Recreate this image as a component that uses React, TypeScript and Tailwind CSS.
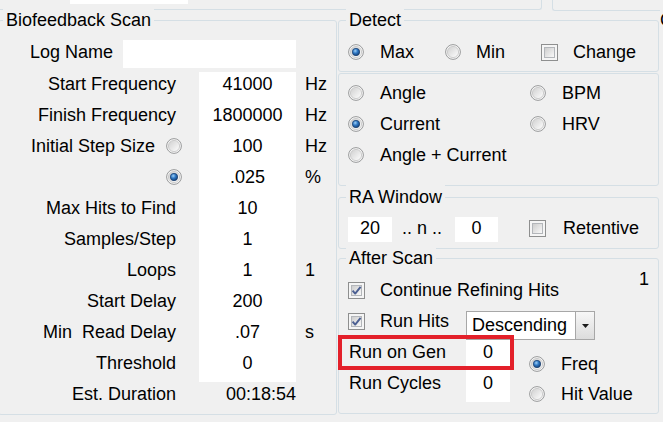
import React from "react";

function Radio({ checked = false }: { checked?: boolean }) {
  return (
    <svg width="16" height="16" viewBox="0 0 16 16" className="block shrink-0">
      <defs>
        <linearGradient id="rbFace" x1="0" y1="0" x2="1" y2="1">
          <stop offset="0" stopColor="#cfcfcf" />
          <stop offset="1" stopColor="#ffffff" />
        </linearGradient>
        <radialGradient id="rbDot" cx="40%" cy="35%" r="70%">
          <stop offset="0" stopColor="#9fd0f6" />
          <stop offset="0.45" stopColor="#2f78c4" />
          <stop offset="1" stopColor="#0f3a70" />
        </radialGradient>
      </defs>
      <circle cx="8" cy="8" r="7.4" fill="#f6f6f6" stroke="#999a9b" strokeWidth="1" />
      <circle cx="8" cy="8" r="5.6" fill="url(#rbFace)" stroke="#c4c4c4" strokeWidth="0.8" />
      {checked && <circle cx="8" cy="8" r="3.7" fill="url(#rbDot)" stroke="#1b3d6b" strokeWidth="0.7" />}
    </svg>
  );
}

function Check({ checked = false }: { checked?: boolean }) {
  return (
    <svg width="17" height="17" viewBox="0 0 17 17" className="block shrink-0">
      <defs>
        <linearGradient id="cbFace" x1="0" y1="0" x2="1" y2="1">
          <stop offset="0" stopColor="#cbcbcb" />
          <stop offset="1" stopColor="#fbfbfb" />
        </linearGradient>
      </defs>
      <rect x="0.5" y="0.5" width="16" height="16" fill="#f5f5f5" stroke="#8e8f8f" />
      <rect x="3.5" y="3.5" width="10" height="10" fill="url(#cbFace)" stroke="#b3b6ba" />
      {checked && (
        <path d="M4.6 8.6 L7.2 11.6 L12.6 4.8" fill="none" stroke="#4b5f92" strokeWidth="1.9" strokeLinejoin="round" />
      )}
    </svg>
  );
}

function RadioOpt({ label, checked = false }: { label: string; checked?: boolean }) {
  return (
    <div className="flex h-[24px] items-center">
      <Radio checked={checked} />
      <span className="ml-[16px] whitespace-nowrap">{label}</span>
    </div>
  );
}

function CheckOpt({ label, checked = false }: { label: string; checked?: boolean }) {
  return (
    <div className="flex h-[24px] items-center">
      <Check checked={checked} />
      <span className="ml-[15px] whitespace-nowrap">{label}</span>
    </div>
  );
}

function GroupTitle({ text }: { text: string }) {
  return (
    <span className="absolute left-[7px] top-[-13px] whitespace-nowrap bg-[#f0f0f0] px-[3px] leading-[24px]">
      {text}
    </span>
  );
}

type ScanRow = {
  label: string;
  value: string;
  unit?: string;
  radio?: "on" | "off";
};

const scanRows: ScanRow[] = [
  { label: "Start Frequency", value: "41000", unit: "Hz" },
  { label: "Finish Frequency", value: "1800000", unit: "Hz" },
  { label: "Initial Step Size", value: "100", unit: "Hz", radio: "off" },
  { label: "", value: ".025", unit: "%", radio: "on" },
  { label: "Max Hits to Find", value: "10" },
  { label: "Samples/Step", value: "1" },
  { label: "Loops", value: "1", unit: "1" },
  { label: "Start Delay", value: "200" },
  { label: "Min  Read Delay", value: ".07", unit: "s" },
  { label: "Threshold", value: "0" },
];

export default function App() {
  return (
    <div className="relative h-[422px] w-[663px] overflow-hidden bg-[#f0f0f0] font-['Liberation_Sans',Arial,sans-serif] text-[18px] text-black">
      {/* upper panels, only their lower edges show */}
      <div className="flex h-[11px] items-start">
        <div className="-ml-[4px] flex h-[10px] w-[546px] shrink-0 items-start rounded-b-[3px] border-x border-b border-[#d5dfe5]">
          <div className="ml-[73px] h-[4px] w-[118px] bg-white" />
        </div>
        <div className="ml-[10px] h-[11px] flex-1 rounded-bl-[3px] border-b border-l border-[#d5dfe5]" />
      </div>

      <div className="flex items-start pt-[9px]">
        {/* Biofeedback Scan */}
        <div className="relative -ml-[2px] h-[395px] w-[339px] shrink-0 rounded-[3px] border border-[#d5dfe5] pt-[19px]">
          <span className="absolute left-[4px] top-[-13px] whitespace-nowrap bg-[#f0f0f0] px-[3px] leading-[24px]">
            Biofeedback Scan
          </span>

          <div className="flex h-[32px] items-start">
            <div className="w-[114px] text-right leading-[24px]">Log Name</div>
            <div className="ml-[10px] h-[28px] w-[173px] bg-white" />
          </div>

          {scanRows.map((r, i) => (
            <div key={i} className="flex h-[31px] items-start leading-[24px]">
              {r.radio ? (
                <div className="flex h-[24px] w-[184px] items-center justify-end pr-[1px]">
                  {r.label && <span className="mr-[11px] whitespace-nowrap">{r.label}</span>}
                  <Radio checked={r.radio === "on"} />
                </div>
              ) : (
                <div className="w-[184px] whitespace-pre pr-[7px] text-right">{r.label}</div>
              )}
              <div className="ml-[16px] h-full w-[97px] bg-white text-center">{r.value}</div>
              <div className="ml-[9px] whitespace-nowrap">{r.unit ?? ""}</div>
            </div>
          ))}

          <div className="flex h-[31px] items-start leading-[24px]">
            <div className="w-[184px] pr-[7px] text-right">Est. Duration</div>
            <div className="ml-[16px] w-[97px] whitespace-nowrap pl-[27px]">00:18:54</div>
          </div>
        </div>

        {/* right column */}
        <div className="ml-[1px] flex w-[321px] shrink-0 flex-col">
          {/* Detect */}
          <div className="relative h-[52px] rounded-[3px] border border-[#d5dfe5] pl-[9px] pt-[19px]">
            <GroupTitle text="Detect" />
            <div className="flex items-center leading-[24px]">
              <div className="w-[97px]">
                <RadioOpt label="Max" checked />
              </div>
              <div className="w-[96px]">
                <div className="flex h-[24px] items-center">
                  <Radio />
                  <span className="ml-[15px]">Min</span>
                </div>
              </div>
              <CheckOpt label="Change" />
            </div>
          </div>

          {/* signal selection */}
          <div className="mt-[1px] h-[113px] rounded-[3px] border border-[#d5dfe5] pl-[9px] pt-[7px] leading-[24px]">
            <div className="grid grid-cols-[182px_auto]">
              <div className="h-[31px]">
                <RadioOpt label="Angle" />
              </div>
              <div className="h-[31px]">
                <RadioOpt label="BPM" />
              </div>
              <div className="h-[31px]">
                <RadioOpt label="Current" checked />
              </div>
              <div className="h-[31px]">
                <RadioOpt label="HRV" />
              </div>
              <div className="h-[31px]">
                <RadioOpt label="Angle + Current" />
              </div>
            </div>
          </div>

          {/* RA Window */}
          <div className="relative mt-[11px] h-[52px] rounded-[3px] border border-[#d5dfe5] pl-[9px] pt-[19px]">
            <GroupTitle text="RA Window" />
            <div className="flex items-start leading-[23px]">
              <div className="h-[25px] w-[44px] bg-white text-center">20</div>
              <div className="w-[63px] whitespace-nowrap pl-[10px]">.. n ..</div>
              <div className="h-[25px] w-[43px] bg-white text-center">0</div>
              <div className="ml-[31px] flex h-[23px] items-center">
                <Check />
                <span className="ml-[17px]">Retentive</span>
              </div>
            </div>
          </div>

          {/* After Scan */}
          <div className="relative mt-[9px] h-[156px] rounded-[3px] border border-[#d5dfe5] pl-[9px] pr-[9px] pt-[19px] leading-[24px]">
            <GroupTitle text="After Scan" />
            <div className="flex h-[31px] items-start">
              <CheckOpt label="Continue Refining Hits" checked />
              <span className="-mt-[11px] ml-auto">1</span>
            </div>
            <div className="flex h-[31px] items-start">
              <div className="w-[118px]">
                <CheckOpt label="Run Hits" checked />
              </div>
              <div className="mt-[2px] flex h-[29px] w-[129px] border border-[#a7a7a7] bg-white">
                <div className="flex-1 whitespace-nowrap pl-[5px] leading-[26px]">Descending</div>
                <div className="flex w-[19px] items-center justify-center border-l border-[#a7a7a7] bg-gradient-to-b from-[#f7f7f7] to-[#dcdcdc]">
                  <svg width="7" height="4" viewBox="0 0 7 4" className="block">
                    <path d="M0 0 H7 L3.5 4 Z" fill="#1b1b1b" />
                  </svg>
                </div>
              </div>
            </div>
            <div className="flex items-start">
              <div className="flex w-[162px] flex-col">
                <div className="flex h-[31px]">
                  <div className="w-[118px] whitespace-nowrap pl-[1px]">Run on Gen</div>
                  <div className="w-[44px] bg-white text-center">0</div>
                </div>
                <div className="flex h-[31px]">
                  <div className="w-[118px] whitespace-nowrap pl-[1px]">Run Cycles</div>
                  <div className="w-[44px] bg-white text-center">0</div>
                </div>
              </div>
              <div className="ml-[19px] mt-[12px] flex flex-col">
                <div className="h-[30px]">
                  <RadioOpt label="Freq" checked />
                </div>
                <div className="h-[30px]">
                  <RadioOpt label="Hit Value" />
                </div>
              </div>
            </div>
          </div>
        </div>

        {/* next panel, only its caption start shows */}
        <div className="relative ml-[1px] w-[4px]">
          <span className="absolute left-0 top-[-12px] whitespace-nowrap bg-[#f0f0f0] leading-[24px]">Control</span>
        </div>
      </div>

      {/* highlight frame */}
      <div className="absolute left-[338px] top-[335px] h-[35px] w-[176px] border-[4px] border-[#e3202a]" />
    </div>
  );
}
